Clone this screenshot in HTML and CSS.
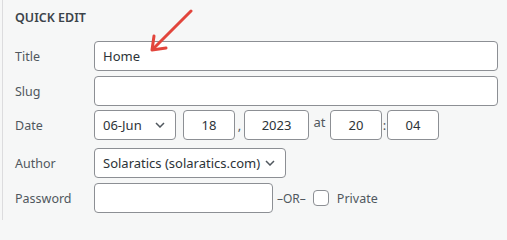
FILE: index.html
```html
<!DOCTYPE html>
<html>
<head>
<meta charset="utf-8">
<link rel="stylesheet" href="styles.css">
</head>
<body>
<div class="panel">
  <div class="heading">QUICK EDIT</div>
  <div class="rows">
    <div class="row">
      <span class="label">Title</span>
      <div class="input wide">Home</div>
    </div>
    <div class="row">
      <span class="label">Slug</span>
      <div class="input wide"></div>
    </div>
    <div class="row date-row">
      <span class="label">Date</span>
      <div class="input select month">06-Jun
        <svg class="chev" width="10" height="6" viewBox="0 0 10 6"><path d="M1 1 L5 5 L9 1" fill="none" stroke="#50575e" stroke-width="1.5"/></svg>
      </div>
      <div class="input num day">18</div>
      <span class="sep comma">,</span>
      <div class="input num year">2023</div>
      <span class="sep at">at</span>
      <div class="input num hm">20</div>
      <span class="sep colon">:</span>
      <div class="input num hm">04</div>
    </div>
    <div class="row">
      <span class="label">Author</span>
      <div class="input select author">Solaratics (solaratics.com)
        <svg class="chev" width="10" height="6" viewBox="0 0 10 6"><path d="M1 1 L5 5 L9 1" fill="none" stroke="#50575e" stroke-width="1.5"/></svg>
      </div>
    </div>
    <div class="row">
      <span class="label">Password</span>
      <div class="input pass"></div>
      <span class="or">–OR–</span>
      <span class="checkbox"></span>
      <span class="private">Private</span>
    </div>
  </div>
  <svg class="arrow" width="60" height="50" viewBox="0 0 60 50">
    <path d="M46 2 L9 39" fill="none" stroke="#e2453c" stroke-width="3" stroke-linecap="round"/>
    <path d="M9 27 L7 41 L21 39" fill="none" stroke="#e2453c" stroke-width="3" stroke-linecap="round" stroke-linejoin="round"/>
  </svg>
</div>
</body>
</html>
```
FILE: styles.css
```css
html, body {
  margin: 0;
  padding: 0;
  background: #f6f7f7;
}
body {
  font-family: "Noto Sans", "Open Sans", sans-serif;
  font-size: 12.5px;
  color: #50575e;
}
.panel {
  position: relative;
  margin-left: 2px;
  border-left: 1px solid #dcdcde;
  padding: 9px 10px 0 12px;
  height: 211px;
}
.heading {
  font-weight: 600;
  font-size: 12.5px;
  color: #3c434a;
  line-height: 18px;
  margin-bottom: 14px;
}
.rows {
  display: flex;
  flex-direction: column;
  gap: 5px;
}
.row {
  display: flex;
  align-items: center;
  height: 30px;
}
.date-row {
  margin-top: -1px;
  margin-bottom: 3px;
}
.label {
  width: 79px;
  flex: none;
  color: #50575e;
}
.input {
  box-sizing: border-box;
  height: 30px;
  border: 1px solid #8c8f94;
  border-radius: 4px;
  background: #fff;
  color: #2c3338;
  font-size: 13px;
  white-space: nowrap;
  display: flex;
  align-items: center;
  padding: 0 8px;
  flex: none;
}
.wide {
  width: 404px;
}
.select {
  justify-content: space-between;
}
.month {
  width: 82px;
}
.author {
  width: 192px;
}
.chev {
  flex: none;
  margin-right: 2px;
}
.num {
  justify-content: center;
  padding: 0;
}
.day {
  width: 52px;
  margin-left: 7px;
}
.year {
  width: 65px;
}
.hm {
  width: 52px;
}
.sep {
  color: #50575e;
  font-size: 13px;
  flex: none;
}
.comma {
  width: 9px;
  text-align: center;
}
.at {
  width: 21px;
  text-align: center;
  margin-top: -6px;
}
.colon {
  width: 5px;
  text-align: center;
}
.pass {
  width: 179px;
}
.or {
  margin-left: 4px;
  font-size: 12px;
}
.checkbox {
  box-sizing: border-box;
  width: 16px;
  height: 16px;
  border: 1px solid #8c8f94;
  border-radius: 4px;
  background: #fff;
  margin-left: 7px;
  flex: none;
}
.private {
  margin-left: 8px;
}
.arrow {
  position: absolute;
  left: 142px;
  top: 9px;
}
```
